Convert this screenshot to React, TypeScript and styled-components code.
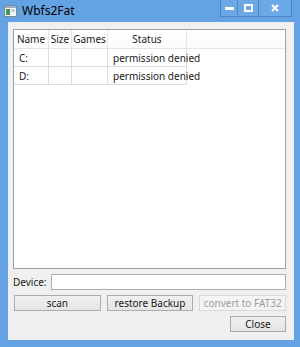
import React from "react";
import styled, { createGlobalStyle } from "styled-components";

const Global = createGlobalStyle`
  html, body { margin: 0; padding: 0; }
  body { width: 300px; height: 347px; overflow: hidden; font-family: "Noto Sans", "Open Sans", sans-serif; }
`;

const Frame = styled.div`
  width: 300px;
  height: 347px;
  box-sizing: border-box;
  background: #64a3e3;
  display: flex;
  flex-direction: column;
  padding: 0 6px 7px 8px;
`;

const TitleBar = styled.div`
  height: 22px;
  display: flex;
  align-items: flex-start;
  margin-left: -8px;
  margin-right: -6px;
  padding-left: 4px;
`;

const AppIcon = styled.svg`
  width: 13px;
  height: 12px;
  margin-top: 5px;
  flex: none;
`;

const Title = styled.span`
  font-size: 12px;
  line-height: 14px;
  margin-top: 4px;
  margin-left: 5px;
  color: #000;
  flex: 1;
`;

const Caption = styled.div`
  display: flex;
  height: 16px;
  margin-right: 8px;
  border: 1px solid #4b86c4;
  border-top: none;
`;

const CapBtn = styled.div<{ $w: number; $last?: boolean }>`
  width: ${(p) => p.$w}px;
  height: 16px;
  display: flex;
  align-items: center;
  justify-content: center;
  border-right: ${(p) => (p.$last ? "none" : "1px solid #4b86c4")};
  background: #6aa8e6;
`;

const Client = styled.div`
  flex: 1;
  background: #f0f0f0;
  display: flex;
  flex-direction: column;
  padding: 7px 8px 7px 5px;
  gap: 5px;
  font-size: 10px;
  color: #1a1a1a;
`;

const View = styled.div`
  height: 240px;
  box-sizing: border-box;
  background: #fff;
  border: 1px solid #9aa0a8;
  overflow: hidden;
`;

const HeaderRow = styled.div`
  display: flex;
  height: 18px;
  border-bottom: 1px solid #e5e5e5;
  background: linear-gradient(#ffffff, #fbfbfb);
`;

const Row = styled.div`
  display: flex;
  height: 18px;
`;

const HeadCell = styled.div<{ $w: number }>`
  width: ${(p) => p.$w}px;
  flex: none;
  box-sizing: border-box;
  border-right: 1px solid #e5e5e5;
  display: flex;
  align-items: center;
  justify-content: center;
  white-space: nowrap;
`;

const Cell = styled.div<{ $w: number }>`
  width: ${(p) => p.$w}px;
  flex: none;
  box-sizing: border-box;
  border-right: 1px solid #dcdcdc;
  border-bottom: 1px solid #dcdcdc;
  display: flex;
  align-items: center;
  padding-left: 5px;
  white-space: nowrap;
`;

const DeviceRow = styled.div`
  display: flex;
  align-items: center;
  gap: 4px;
  height: 16px;
`;

const Label = styled.span`
  flex: none;
  white-space: nowrap;
`;

const Input = styled.div`
  flex: 1;
  height: 16px;
  box-sizing: border-box;
  background: #fff;
  border: 1px solid #abadb3;
`;

const ButtonRow = styled.div`
  display: grid;
  grid-template-columns: 1fr 1fr 1fr;
  gap: 6px;
  padding-left: 1px;
`;

const CloseRow = styled.div`
  display: flex;
  justify-content: flex-end;
`;

const Button = styled.div<{ $disabled?: boolean; $w?: number }>`
  height: 16px;
  ${(p) => (p.$w ? `width: ${p.$w}px;` : "")}
  box-sizing: border-box;
  display: flex;
  align-items: center;
  justify-content: center;
  border: 1px solid ${(p) => (p.$disabled ? "#d9d9d9" : "#acacac")};
  background: ${(p) => (p.$disabled ? "#f4f4f4" : "linear-gradient(#f0f0f0, #e5e5e5)")};
  color: ${(p) => (p.$disabled ? "#9d9d9d" : "#1a1a1a")};
  white-space: nowrap;
`;

const cols = [35, 23, 36, 79];

export default function App() {
  const rows = [
    ["C:", "", "", "permission denied"],
    ["D:", "", "", "permission denied"],
  ];
  return (
    <>
      <Global />
      <Frame>
        <TitleBar>
          <AppIcon viewBox="0 0 13 12">
            <rect x="0.5" y="0.5" width="12" height="11" fill="#f4f4f4" stroke="#7a8a99" />
            <rect x="1" y="1" width="11" height="2" fill="#8fb0cf" />
            <rect x="2" y="4" width="4" height="6" fill="#3f9a55" />
            <rect x="7" y="4" width="4" height="3" fill="#c9d3dc" />
          </AppIcon>
          <Title>Wbfs2Fat</Title>
          <Caption>
            <CapBtn $w={16}>
              <svg width="9" height="3"><rect width="9" height="3" fill="#fff" /></svg>
            </CapBtn>
            <CapBtn $w={20}>
              <svg width="9" height="8"><rect x="1" y="1" width="7" height="6" fill="none" stroke="#fff" strokeWidth="2" /></svg>
            </CapBtn>
            <CapBtn $w={32} $last>
              <svg width="8" height="8"><path d="M1 1L7 7M7 1L1 7" stroke="#fff" strokeWidth="2" /></svg>
            </CapBtn>
          </Caption>
        </TitleBar>
        <Client>
          <View>
            <HeaderRow>
              {["Name", "Size", "Games", "Status"].map((h, i) => (
                <HeadCell key={h} $w={cols[i]}>{h}</HeadCell>
              ))}
            </HeaderRow>
            {rows.map((r, ri) => (
              <Row key={ri}>
                {r.map((c, ci) => (
                  <Cell key={ci} $w={cols[ci]}>{c}</Cell>
                ))}
              </Row>
            ))}
          </View>
          <DeviceRow>
            <Label>Device:</Label>
            <Input />
          </DeviceRow>
          <ButtonRow>
            <Button>scan</Button>
            <Button>restore Backup</Button>
            <Button $disabled>convert to FAT32</Button>
          </ButtonRow>
          <CloseRow>
            <Button $w={56}>Close</Button>
          </CloseRow>
        </Client>
      </Frame>
    </>
  );
}
